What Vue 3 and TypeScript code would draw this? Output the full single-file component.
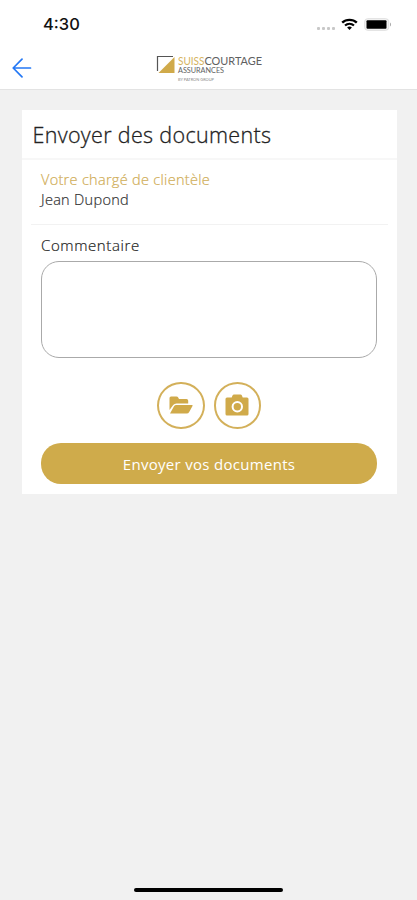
<script setup lang="ts">
import { ref } from 'vue'

const advisor = 'Jean Dupond'
const comment = ref<string>('')
const signalDots = [0, 1, 2, 3]
</script>

<template>
  <div class="screen">
    <header class="header">
      <div class="status">
        <span class="time">4:30</span>
        <div class="indicators">
          <span class="signal"><i v-for="dot in signalDots" :key="dot"></i></span>
          <svg class="wifi" width="17" height="13" viewBox="0 0 17 13" fill="none" stroke="#000">
            <path d="M1.2 4.6C5.2.9 11.8.9 15.8 4.6" stroke-width="2.4" />
            <path d="M4 7.5c2.6-2.3 6.4-2.3 9 0" stroke-width="2.2" />
            <path d="M6.1 9.5c1.5-1.2 3.3-1.2 4.8 0L8.5 12z" fill="#000" stroke="none" />
          </svg>
          <svg class="battery" width="28" height="13" viewBox="0 0 28 13">
            <rect x=".7" y=".7" width="24" height="11.6" rx="3" fill="#f4f4f4" stroke="#dedede" />
            <rect x="2.5" y="2.3" width="20" height="8.4" rx="1" fill="#000" />
            <path d="M26 4.5c1.4.6 1.4 3.4 0 4z" fill="#aaa" />
          </svg>
        </div>
      </div>
      <nav class="nav">
        <button class="back" type="button" aria-label="Retour">
          <svg width="20" height="20" viewBox="0 0 20 20" fill="none" stroke="#2478f5" stroke-width="1.7" stroke-linecap="round" stroke-linejoin="round">
            <path d="M18.5 10H1.5M10 1.2 1.2 10 10 18.8" />
          </svg>
        </button>
        <svg class="logo" width="108" height="30" viewBox="0 0 108 30">
          <path d="M1.5 16V1.5H17" fill="none" stroke="#555" stroke-width="1.2" />
          <path d="M18.5 2v16H2.5z" fill="#d0aa4a" />
          <text x="22" y="9.8" font-size="11" textLength="26.5" lengthAdjust="spacingAndGlyphs" fill="#d5b35e">SUISS</text>
          <text x="48.5" y="9.8" font-size="11" textLength="57.5" lengthAdjust="spacingAndGlyphs" fill="#606060">COURTAGE</text>
          <text x="22" y="18" font-size="7.5" textLength="46" lengthAdjust="spacingAndGlyphs" fill="#606060">ASSURANCES</text>
          <text x="22" y="26.3" font-size="4" textLength="36" lengthAdjust="spacingAndGlyphs" fill="#888">BY PATRON GROUP</text>
        </svg>
      </nav>
    </header>

    <main class="card">
      <h1 class="title">Envoyer des documents</h1>
      <section class="advisor">
        <p class="label">Votre chargé de clientèle</p>
        <p class="name">{{ advisor }}</p>
      </section>
      <form class="form" @submit.prevent>
        <label class="caption" for="comment">Commentaire</label>
        <textarea id="comment" v-model="comment" class="comment"></textarea>
        <div class="sources">
          <button class="source" type="button" aria-label="Fichiers">
            <svg width="24" height="20" viewBox="0 0 24 20" fill="#d0aa4a">
              <path d="M.5 15V3Q.5 1.500 2 1.500h5.500q1.200 0 1.700 1l.8 1.500h7.500q1.700 0 1.700 1.700V8.500H7.500q-2.200 0-3.300 1.600z" />
              <path d="M1 18.500 5 11.300Q5.800 10 7.300 10H23q1 0 .5 1l-3.300 6q-.8 1.500-2.500 1.500z" />
            </svg>
          </button>
          <button class="source" type="button" aria-label="Appareil photo">
            <svg width="24" height="22" viewBox="0 0 24 22">
              <path d="M2 3.500h4.700l.8-2Q8 .5 9 .5h6.500q1 0 1.400 1l.8 2H22q1.500 0 1.500 1.500v15q0 1.500-1.500 1.500H2Q.5 21.500.5 20V5Q.5 3.500 2 3.500z" fill="#d0aa4a" />
              <circle cx="12.300" cy="12.800" r="4.700" fill="none" stroke="#fff" stroke-width="2" />
            </svg>
          </button>
        </div>
        <button class="submit" type="submit">Envoyer vos documents</button>
      </form>
    </main>
    <div class="home"></div>
  </div>
</template>

<style>
body {
  margin: 0;
}
</style>

<style scoped>
.screen {
  box-sizing: border-box;
  display: flex;
  flex-direction: column;
  height: 900px;
  background: #f1f1f1;
  color: #222;
  font-family: "Open Sans", sans-serif;
}
.header {
  box-sizing: border-box;
  height: 90px;
  border-bottom: 1px solid #e3e3e3;
  background: #fff;
}
.status {
  display: flex;
  justify-content: space-between;
  align-items: center;
  height: 48px;
  padding: 0 25px 0 43px;
}
.time {
  color: #111;
  font: 500 16.5px/20px Inter, sans-serif;
}
.indicators {
  display: flex;
  align-items: center;
}
.signal {
  display: flex;
  gap: 2px;
  margin: 8px 6px 0 0;
}
.signal i {
  width: 3px;
  height: 3px;
  border-radius: 1px;
  background: #c8c8c8;
}
.battery {
  margin-left: 6px;
}
.nav {
  display: flex;
  align-items: flex-start;
  height: 41px;
  padding-left: 12px;
}
button {
  display: flex;
  align-items: center;
  justify-content: center;
  padding: 0;
  border: 0;
  background: none;
  font: inherit;
}
.back {
  margin-top: 10px;
}
.logo {
  margin: 7px 0 0 124px;
  font-family: Lato, sans-serif;
}
.card {
  box-sizing: border-box;
  width: 375px;
  height: 384px;
  margin: 20px 0 0 22px;
  background: #fff;
}
.title {
  box-sizing: border-box;
  height: 50px;
  margin: 0;
  padding-left: 10.5px;
  border-bottom: 2px solid #f7f7f7;
  font-size: 21.5px;
  font-weight: 300;
  -webkit-text-stroke: 0.3px currentColor;
  letter-spacing: 0.33px;
  line-height: 49px;
}
.advisor {
  box-sizing: border-box;
  height: 65px;
  margin: 0 9px;
  padding: 10px 10px 0;
  border-bottom: 1px solid #f2f2f2;
  font-size: 14.5px;
  font-weight: 300;
  letter-spacing: 0.3px;
  line-height: 20px;
  -webkit-text-stroke: 0.2px currentColor;
}
.advisor p {
  margin: 0;
}
.label {
  color: #cfac55;
}
.name {
  color: #333;
}
.form {
  display: flex;
  flex-direction: column;
  padding: 10px 20px 0 19px;
}
.caption {
  height: 26px;
  color: #222;
  font-size: 15px;
  font-weight: 300;
  letter-spacing: 0.6px;
  line-height: 20px;
  -webkit-text-stroke: 0.2px currentColor;
}
.comment {
  box-sizing: border-box;
  height: 97px;
  padding: 12px;
  border: 1px solid #aaa;
  border-radius: 18px;
  outline: 0;
  background: #fff;
  resize: none;
  font: inherit;
}
.sources {
  display: flex;
  justify-content: center;
  gap: 9px;
  margin-top: 24px;
}
.source {
  box-sizing: border-box;
  width: 47.5px;
  height: 47px;
  border: 2px solid #d3b05a;
  border-radius: 50%;
}
.source svg {
  margin-top: -2px;
}
.submit {
  height: 41px;
  margin-top: 14px;
  border-radius: 20px;
  background: #cfab4b;
  color: #fff;
  font-size: 15px;
  letter-spacing: 0.3px;
}
.home {
  width: 149px;
  height: 4px;
  margin: auto auto 8px;
  border-radius: 2px;
  background: #000;
}
</style>
